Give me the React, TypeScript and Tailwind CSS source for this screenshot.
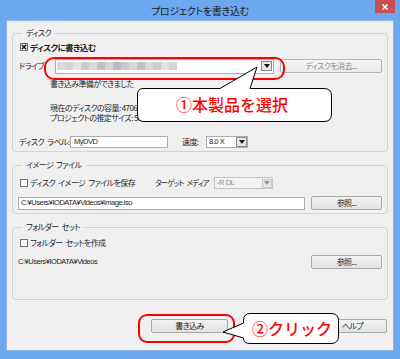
import React from "react";

const mosaic = [
  "#dcdce0", "#d2d2d7", "#e4e4e7", "#cacad0", "#dcdce0", "#c0c0c7", "#d3d3d8", "#b9b9c1",
  "#c8c8ce", "#d8d8dc", "#c2c2c8", "#dadade", "#cbcbd1", "#e2e2e5", "#d6d6da",
];

function T({ s }: { s: string }) {
  const parts = s.split(" ");
  return (
    <>
      {parts.map((p, i) => (
        <React.Fragment key={i}>
          {i > 0 && <span className="inline-block w-[3px]"> </span>}
          {p}
        </React.Fragment>
      ))}
    </>
  );
}

function Check({ checked }: { checked?: boolean }) {
  return (
    <div className="w-[8px] h-[8px] border border-[#707070] bg-[#f6f6f6] flex items-center justify-center shrink-0">
      {checked && (
        <svg width="6" height="6" viewBox="0 0 6 6">
          <path d="M0.8 0.8 L5.2 5.2 M5.2 0.8 L0.8 5.2" stroke="#111" strokeWidth="1.4" />
        </svg>
      )}
    </div>
  );
}

function Arrow({ disabled }: { disabled?: boolean }) {
  return (
    <div
      className={
        disabled
          ? "w-[10px] h-[9px] border border-[#c8c8c8] bg-[#e6e6e6] flex items-center justify-center shrink-0"
          : "w-[11px] h-[10px] border border-[#8a8a8a] bg-[#e8e8e8] flex items-center justify-center shrink-0"
      }
    >
      <svg width="6" height="4" viewBox="0 0 6 4">
        <path d="M0 0 H6 L3 4 Z" fill={disabled ? "#9a9a9a" : "#111"} />
      </svg>
    </div>
  );
}

function Btn({ label, w, disabled }: { label: string; w: string; disabled?: boolean }) {
  return (
    <div
      className={
        (disabled
          ? "border-[#b5b5b5] text-[#8c8c8c] bg-gradient-to-b from-[#f5f5f5] to-[#ececec] "
          : "border-[#a8a8a8] text-[#222] bg-gradient-to-b from-[#f3f3f3] to-[#e2e2e2] ") +
        w +
        " h-[14px] border rounded-[2px] flex items-center justify-center shrink-0 whitespace-nowrap"
      }
    >
      {label}
    </div>
  );
}

const latin = "font-['Liberation_Sans',sans-serif] text-[7.5px] tracking-[-0.45px]";

export default function App() {
  return (
    <div className="w-[400px] h-[359px] bg-[#6ca8ef] flex flex-col relative overflow-hidden whitespace-nowrap font-['Noto_Sans_CJK_JP',sans-serif] [font-feature-settings:'palt'] text-[8px] tracking-[-0.6px] leading-[10px] text-[#1e1e1e]">
      {/* title bar */}
      <div className="h-[20px] relative flex items-center justify-center shrink-0">
        <span className="text-[10px] leading-none text-[#1a1a1a] mt-[2px] tracking-[-0.3px]">プロジェクトを書き込む</span>
        <div className="absolute right-[5px] top-0 w-[20px] h-[13px] bg-[#c75050] flex items-center justify-center">
          <svg width="6" height="6" viewBox="0 0 6 6">
            <path d="M0.5 0.5 L5.5 5.5 M5.5 0.5 L0.5 5.5" stroke="#fff" strokeWidth="1.5" />
          </svg>
        </div>
      </div>

      {/* client area */}
      <div className="mx-[6px] mb-[8px] flex-1 bg-[#f0f0f0] border border-[#90b4e4] px-[5px] flex flex-col">
        {/* Disk group */}
        <fieldset className="mt-[7px] border border-[#d3d3d3] rounded-[4px] px-[6px] pb-[3px] min-w-0">
          <legend className="ml-[3px] px-[4px] leading-[10px]">ディスク</legend>
          <div className="mt-[3px] h-[12px] flex items-center ml-[1px] gap-[2px]">
            <Check checked />
            <span className="font-bold text-[8.5px]">ディスクに書き込む</span>
          </div>
          <div className="mt-[6px] h-[14px] flex items-center">
            <span className="w-[36px] shrink-0">ドライブ:</span>
            <div className="w-[219px] h-[15px] bg-white border border-[#abadb3] flex items-center pl-[1px] pr-[1px] shrink-0">
              <div className="flex h-[8px]">
                {mosaic.map((c, i) => (
                  <div key={i} className="w-[8px] h-[8px]" style={{ backgroundColor: c }} />
                ))}
              </div>
              <div className="flex-1" />
              <Arrow />
            </div>
            <div className="ml-[6px]">
              <Btn label="ディスクを消去..." w="w-[102px]" disabled />
            </div>
          </div>
          <div className="mt-[6px] pl-[31px] h-[10px]">書き込み準備ができました</div>
          <div className="mt-[14px] pl-[31px] h-[10px]">現在のディスクの容量: 4706 MB</div>
          <div className="pl-[31px] h-[10px]">プロジェクトの推定サイズ: 50 MB</div>
          <div className="mt-[13px] h-[12px] flex items-center">
            <span className="w-[51px] shrink-0"><T s="ディスク ラベル:" /></span>
            <div className={"w-[98px] h-[12px] bg-white border border-[#abadb3] flex items-center pl-[3px] shrink-0 " + latin}>MyDVD</div>
            <span className="ml-[14px] w-[24px] shrink-0">速度:</span>
            <div className="w-[42px] h-[12px] bg-white border border-[#abadb3] flex items-center pl-[2px] shrink-0">
              <span className={"flex-1 " + latin}>8.0 X</span>
              <Arrow />
            </div>
          </div>
        </fieldset>

        {/* Image file group */}
        <fieldset className="mt-[8px] border border-[#d3d3d3] rounded-[4px] px-[5px] pb-[3px] min-w-0">
          <legend className="ml-[4px] px-[4px] leading-[10px]"><T s="イメージ ファイル" /></legend>
          <div className="mt-[7px] h-[12px] flex items-center">
            <div className="ml-[2px] flex items-center gap-[2px] w-[135px] shrink-0">
              <Check />
              <span><T s="ディスク イメージ ファイルを保存" /></span>
            </div>
            <span className="w-[59px] shrink-0 text-[7.5px] tracking-[-0.9px]"><T s="ターゲット メディア" /></span>
            <div className="w-[59px] h-[12px] bg-[#f3f3f3] border border-[#c6c6c6] flex items-center pl-[2px] text-[#8a8a8a] shrink-0">
              <span className={"flex-1 " + latin}>-R DL</span>
              <Arrow disabled />
            </div>
          </div>
          <div className="mt-[7px] h-[14px] flex items-center">
            <div className={"w-[287px] h-[13px] bg-white border border-[#abadb3] flex items-center pl-[2px] shrink-0 " + latin}>
              C:¥Users¥IODATA¥Videos¥image.iso
            </div>
            <div className="ml-[6px]">
              <Btn label="参照..." w="w-[71px]" />
            </div>
          </div>
        </fieldset>

        {/* Folder set group */}
        <fieldset className="mt-[8px] border border-[#d3d3d3] rounded-[4px] px-[5px] pb-[30px] min-w-0">
          <legend className="ml-[4px] px-[4px] leading-[10px]"><T s="フォルダー セット" /></legend>
          <div className="mt-[5px] h-[12px] flex items-center ml-[2px] gap-[2px]">
            <Check />
            <span><T s="フォルダー セットを作成" /></span>
          </div>
          <div className="mt-[6px] h-[14px] flex items-center">
            <div className={"w-[293px] shrink-0 " + latin}>C:¥Users¥IODATA¥Videos</div>
            <Btn label="参照..." w="w-[71px]" />
          </div>
        </fieldset>

        {/* bottom buttons */}
        <div className="mt-[19px] flex items-center">
          <div className="ml-[139px]">
            <Btn label="書き込み" w="w-[77px]" />
          </div>
          <div className="ml-[90px]">
            <Btn label="ヘルプ" w="w-[69px]" />
          </div>
        </div>
      </div>

      {/* red highlight 1 */}
      <div className="absolute left-[44px] top-[57px] w-[241px] h-[23px] border-2 border-[#ff0000] rounded-[10px]" />
      {/* callout 1 */}
      <div className="absolute left-[136px] top-[66px] w-[198px] h-[58px]">
        <svg width="198" height="58" viewBox="0 0 198 58" className="absolute inset-0">
          <path
            d="M7 22.5 H84 L121 1 L114 22.5 H188 Q195.5 22.5 195.5 30 V48 Q195.5 55.5 188 55.5 H8 Q1.5 55.5 1.5 49 V29 Q1.5 22.5 7 22.5 Z"
            fill="#fff"
            stroke="#000"
            strokeWidth="1"
          />
        </svg>
        <div className="absolute left-[40px] top-[28px] text-[16px] leading-[20px] tracking-normal font-medium text-[#ff0000] [font-feature-settings:normal]">
          ①本製品を選択
        </div>
      </div>

      {/* red highlight 2 */}
      <div className="absolute left-[138px] top-[314px] w-[97px] h-[29px] border-2 border-[#ff0000] rounded-[9px]" />
      {/* callout 2 */}
      <div className="absolute left-[222px] top-[312px] w-[118px] h-[33px]">
        <svg width="118" height="33" viewBox="0 0 118 33" className="absolute inset-0">
          <path
            d="M28 1.5 H109 Q116.5 1.5 116.5 8.5 V24 Q116.5 31.5 109 31.5 H28 Q21.5 31.5 21.5 26 L1 20 L21.5 11 V8.5 Q21.5 1.5 28 1.5 Z"
            fill="#fff"
            stroke="#000"
            strokeWidth="1"
          />
        </svg>
        <div className="absolute left-[30px] top-[6px] text-[16px] leading-[20px] tracking-normal font-medium text-[#ff0000] [font-feature-settings:normal]">
          ②クリック
        </div>
      </div>
    </div>
  );
}
